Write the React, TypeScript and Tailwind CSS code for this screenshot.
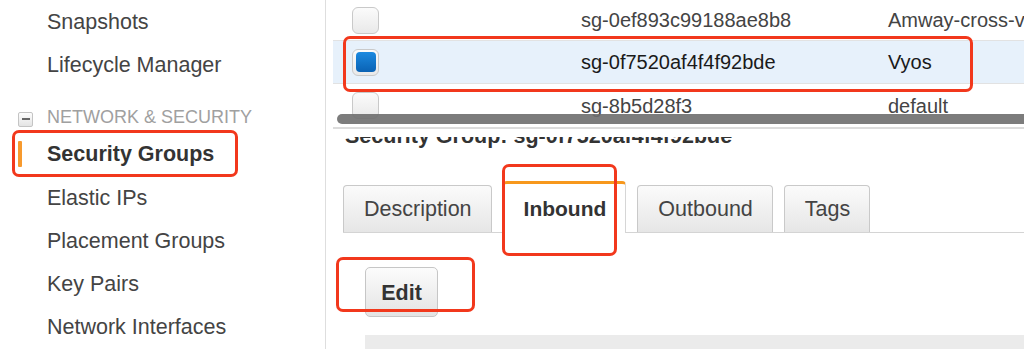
import React from "react";

const navItems = ["Elastic IPs", "Placement Groups", "Key Pairs", "Network Interfaces"];

const rows = [
  { id: "sg-0ef893c99188ae8b8", name: "Amway-cross-vpc", selected: false },
  { id: "sg-0f7520af4f4f92bde", name: "Vyos", selected: true },
  { id: "sg-8b5d28f3", name: "default", selected: false },
];

function RedBox({ className }: { className: string }) {
  return (
    <div
      className={`pointer-events-none absolute z-20 rounded-[7px] border-[3px] border-[#f2381c] ${className}`}
    />
  );
}

function Checkbox({ checked }: { checked: boolean }) {
  return (
    <div className="flex h-[27px] w-[27px] items-center justify-center rounded-[6px] border border-[#c9c9c9] bg-gradient-to-b from-[#fbfbfb] to-[#e9e9e9]">
      {checked && (
        <div className="h-[20px] w-[20px] rounded-[4px] bg-gradient-to-b from-[#1c8ae0] to-[#0a62b4]" />
      )}
    </div>
  );
}

function Tab({ label, active, children }: { label: string; active?: boolean; children?: React.ReactNode }) {
  if (active) {
    return (
      <div className="relative -mb-px flex h-[52px] items-center rounded-t-[4px] border-x border-t-[3px] border-x-[#d6d6d6] border-t-[#f7981d] bg-white pl-[20px] pr-[19px] text-[21px] font-bold text-[#333]">
        {label}
        {children}
      </div>
    );
  }
  return (
    <div className="flex h-[47px] items-center rounded-t-[4px] border-x border-t border-[#c9c9c9] bg-gradient-to-b from-[#fbfbfb] to-[#e6e6e6] pl-[20px] pr-[19px] text-[21.5px] text-[#444]">
      {label}
    </div>
  );
}

export default function App() {
  return (
    <div
      className="flex h-[349px] w-[1024px] overflow-hidden bg-white"
      style={{ fontFamily: '"Liberation Sans", Arial, Helvetica, sans-serif' }}
    >
      {/* sidebar */}
      <div className="w-[326px] shrink-0 border-r border-[#dedede] text-[21.5px] text-[#444]">
        <div className="flex h-[43px] items-center pl-[47px] pt-px">Snapshots</div>
        <div className="flex h-[43px] items-center pl-[47px] pt-px">Lifecycle Manager</div>
        <div className="flex h-[47px] items-center pl-[18px] pt-[15px]">
          <div className="mt-[4px] flex h-[15px] w-[15px] items-center justify-center rounded-[2px] border border-[#c4c4c4] bg-gradient-to-b from-[#fdfdfd] to-[#e4e4e4]">
            <div className="h-[2px] w-[8px] bg-[#666]" />
          </div>
          <span className="ml-[14px] text-[18px] text-[#a0a0a0]">NETWORK &amp; SECURITY</span>
        </div>
        <div className="relative flex h-[43px] items-center pl-[47px] font-bold text-[#333]">
          <div className="absolute left-[18px] top-[8px] h-[26px] w-[4px] rounded-[1px] bg-[#f79a2e]" />
          Security Groups
          <RedBox className="left-[12px] top-[-3px] h-[47px] w-[226px]" />
        </div>
        {navItems.map((item) => (
          <div key={item} className="flex h-[43px] items-center pl-[47px] pt-px">
            {item}
          </div>
        ))}
      </div>

      {/* main */}
      <div className="flex min-w-0 flex-1 flex-col pl-[7px]">
        <div className="relative h-[129px] shrink-0 border-b-2 border-[#dcdcdc]">
          {rows.map((row, i) => (
            <div
              key={row.id}
              className={`relative flex items-center whitespace-nowrap pl-[19px] text-[20px] ${
                i === 0 ? "h-[41px]" : "h-[43px]"
              } ${i < 2 ? "border-b border-[#e2e2e2]" : ""} ${
                row.selected ? "bg-[#e7f1fb] text-[#1a1a1a]" : "text-[#444]"
              }`}
            >
              <div className="w-[229px] shrink-0">
                <Checkbox checked={row.selected} />
              </div>
              <div className="w-[307px] shrink-0">{row.id}</div>
              <div>{row.name}</div>
              {row.selected && <RedBox className="left-[10px] top-[-5px] h-[56px] w-[630px]" />}
            </div>
          ))}
          <div className="absolute left-[4px] right-[-20px] top-[114px] h-[10px] rounded-full bg-[#6e6e6e]/90" />
        </div>

        <div className="mt-[8px] h-[13px] shrink-0 overflow-hidden pl-[12px]">
          <div className="-mt-[12px] whitespace-nowrap text-[21.5px] font-bold leading-[22px] text-[#333]">
            Security Group: sg-0f7520af4f4f92bde
          </div>
        </div>

        <div className="ml-[10px] mt-[31px] flex h-[52px] shrink-0 items-end gap-[11px] border-b border-[#d4d4d4]">
          <Tab label="Description" />
          <Tab label="Inbound" active>
            <RedBox className="left-[-2px] top-[-20px] h-[92px] w-[115px]" />
          </Tab>
          <Tab label="Outbound" />
          <Tab label="Tags" />
        </div>

        <div className="ml-[32px] mt-[34px] shrink-0">
          <div className="relative flex h-[50px] w-[73px] items-center justify-center rounded-[5px] border border-[#c6c6c6] bg-gradient-to-b from-[#fcfcfc] to-[#e4e4e4] pt-[2px] text-[21.5px] font-bold text-[#333]">
            Edit
            <RedBox className="left-[-30px] top-[-11px] h-[55px] w-[139px]" />
          </div>
        </div>

        <div className="ml-[32px] mt-[18px] h-[20px] shrink-0 bg-[#ebebeb]" />
      </div>
    </div>
  );
}
